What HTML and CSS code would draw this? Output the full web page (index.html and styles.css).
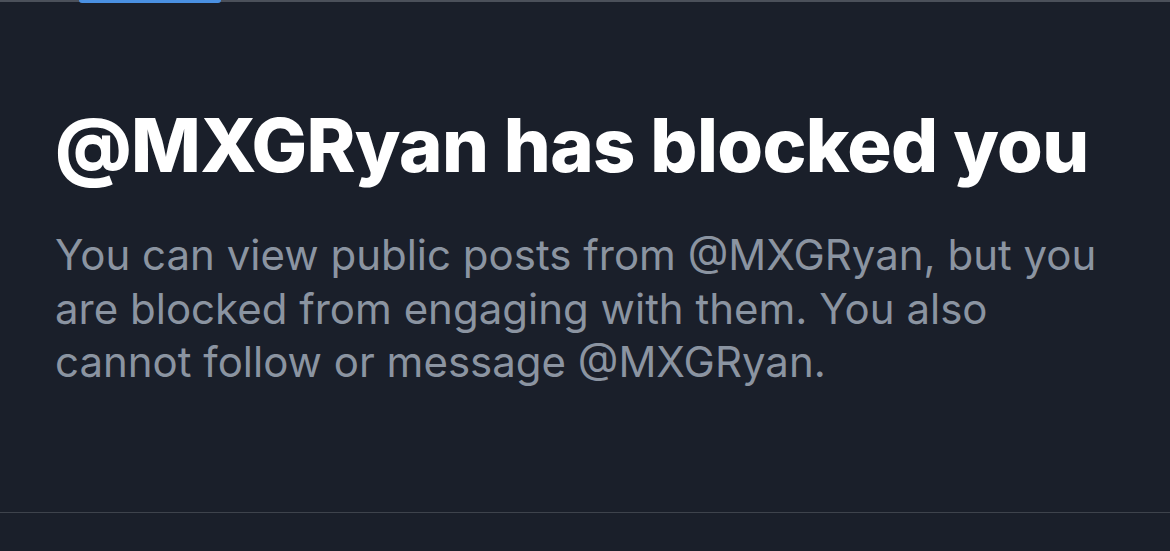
FILE: index.html
```html
<!DOCTYPE html>
<html>
<head>
<meta charset="utf-8">
<link rel="stylesheet" href="styles.css">
</head>
<body>
<div class="topbar"><div class="tab"></div></div>
<main class="empty">
  <h1 class="title">@MXGRyan has blocked you</h1>
  <p class="desc">You can view public posts from @MXGRyan, but you are blocked from engaging with them. You also cannot follow or message @MXGRyan.</p>
</main>
<div class="divider"></div>
</body>
</html>
```
FILE: styles.css
```css
html, body {
  margin: 0;
  padding: 0;
  background: #1a1f2a;
  height: 100%;
}
body {
  font-family: Inter, "Liberation Sans", sans-serif;
  overflow: hidden;
}
.topbar {
  height: 2px;
  background: #4b505a;
  position: relative;
}
.tab {
  position: absolute;
  left: 79px;
  top: 0;
  width: 142px;
  height: 3px;
  background: #4a90e2;
  border-radius: 0 0 3px 3px;
}
.empty {
  padding: 0 40px 0 55px;
  height: 510px;
  box-sizing: border-box;
}
.title {
  margin: 0;
  padding-top: 98px;
  font-size: 74px;
  font-weight: 800;
  color: #ffffff;
  letter-spacing: -0.65px;
  line-height: 90px;
}
.desc {
  margin: 38px 0 0;
  font-size: 42px;
  font-weight: 400;
  color: #8b94a1;
  line-height: 53.5px;
  max-width: 1070px;
}
.divider {
  height: 1px;
  background: #3e434c;
}
```
